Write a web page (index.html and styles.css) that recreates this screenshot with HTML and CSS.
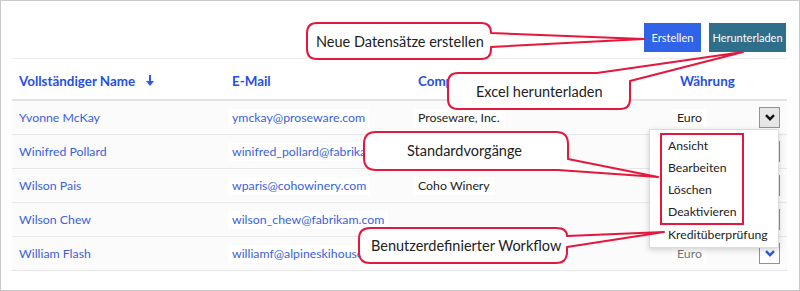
FILE: index.html
```html
<!DOCTYPE html>
<html lang="de">
<head>
<meta charset="UTF-8" />
<title>Kontakte</title>
<link rel="stylesheet" href="styles.css">
</head>
<body>
<div class="frame">
  <div class="toolbar">
    <button class="btn btn-create">Erstellen</button>
    <button class="btn btn-download">Herunterladen</button>
  </div>

  <div class="grid">
    <div class="row head">
      <div class="cell c-name">Vollständiger Name
        <svg class="sort" width="8" height="11" viewBox="0 0 8 11"><path d="M3 0h2v6h3l-4 5-4-5h3z" fill="#2a5ae6"/></svg>
      </div>
      <div class="cell c-mail">E-Mail</div>
      <div class="cell c-comp">Company</div>
      <div class="cell c-cur">Währung</div>
    </div>

    <div class="row">
      <div class="cell c-name"><span class="link">Yvonne McKay</span></div>
      <div class="cell"><span class="box link">ymckay@proseware.com</span></div>
      <div class="cell"><span class="box box-comp">Proseware, Inc.</span></div>
      <div class="cell cur">
        <span class="box box-comp">Euro</span>
        <span class="dd dd-active"><svg width="10" height="7" viewBox="0 0 10 7"><path d="M1 1.2l4 4 4-4" fill="none" stroke="#111" stroke-width="2.4"/></svg></span>
      </div>
    </div>

    <div class="row">
      <div class="cell c-name"><span class="link">Winifred Pollard</span></div>
      <div class="cell"><span class="box link">winifred_pollard@fabrikam.com</span></div>
      <div class="cell"></div>
      <div class="cell cur">
        <span class="dd"></span>
      </div>
    </div>

    <div class="row">
      <div class="cell c-name"><span class="link">Wilson Pais</span></div>
      <div class="cell"><span class="box link">wparis@cohowinery.com</span></div>
      <div class="cell"><span class="box box-comp">Coho Winery</span></div>
      <div class="cell cur">
        <span class="dd"></span>
      </div>
    </div>

    <div class="row">
      <div class="cell c-name"><span class="link">Wilson Chew</span></div>
      <div class="cell"><span class="box link">wilson_chew@fabrikam.com</span></div>
      <div class="cell"></div>
      <div class="cell cur">
        <span class="dd"></span>
      </div>
    </div>

    <div class="row">
      <div class="cell c-name"><span class="link">William Flash</span></div>
      <div class="cell"><span class="box link">williamf@alpineskihouse.com</span></div>
      <div class="cell"></div>
      <div class="cell cur">
        <span class="box box-comp muted">Euro</span>
        <span class="dd"><svg width="10" height="7" viewBox="0 0 10 7"><path d="M1 1.2l4 4 4-4" fill="none" stroke="#2a5ae6" stroke-width="2.4"/></svg></span>
      </div>
    </div>
  </div>

  <div class="overlay">
    <div class="menu">
      <div class="menu-group">
        <div class="menu-item">Ansicht</div>
        <div class="menu-item">Bearbeiten</div>
        <div class="menu-item">Löschen</div>
        <div class="menu-item">Deaktivieren</div>
      </div>
      <div class="menu-item menu-extra">Kreditüberprüfung</div>
    </div>

    <svg class="callouts" width="800" height="291" viewBox="0 0 800 291">
      <path d="M317 23H481Q491 23 491 33L644 39L491 47V49Q491 59 481 59H317Q307 59 307 49V33Q307 23 317 23Z"/>
      <path d="M458 73H597L743 52L630 81V99Q630 109 620 109H458Q448 109 448 99V83Q448 73 458 73Z"/>
      <path d="M376 132H556Q568 132 568 144V159L658 177L558 170H376Q364 170 364 158V144Q364 132 376 132Z"/>
      <path d="M370 228H556Q567 228 567 236L664 232L567 247V252Q567 263 556 263H370Q359 263 359 252V239Q359 228 370 228Z"/>
    </svg>

    <div class="label l-create">Neue Datensätze erstellen</div>
    <div class="label l-excel">Excel herunterladen</div>
    <div class="label l-std">Standardvorgänge</div>
    <div class="label l-flow">Benutzerdefinierter Workflow</div>
  </div>
</div>
</body>
</html>
```

FILE: styles.css
```css
body {
  margin: 0;
  font-family: Lato, "Open Sans", sans-serif;
  color: #222;
  background: white;
}

.frame {
  position: relative;
  width: 800px;
  height: 291px;
  box-sizing: border-box;
  border: 1px solid #c9c9c9;
  padding: 0 12px 0 11px;
  overflow: hidden;
}

/* toolbar */

.toolbar {
  display: flex;
  justify-content: flex-end;
  gap: 8px;
  padding: 22px 1px 6px 0;
  border-bottom: 1px solid #ececec;
}

.btn {
  height: 29px;
  border: none;
  color: white;
  font-family: inherit;
  font-size: 11px;
  padding: 0;
}

.btn-create {
  width: 57px;
  background: #2f63e8;
}

.btn-download {
  width: 77px;
  background: #2e6f8c;
}

/* grid */

.row {
  display: grid;
  grid-template-columns: 216px 185px 259px 1fr;
  align-items: center;
  height: 33px;
  border-bottom: 1px solid #e7e7e7;
  background: #fbfbfb;
  font-size: 12.3px;
}

.row.head {
  height: 37px;
  padding-top: 3px;
  border-bottom: 2px solid #e2e2e2;
  background: white;
  font-weight: bold;
  font-size: 13.4px;
  color: #1f50e6;
}

.cell {
  white-space: nowrap;
  overflow: hidden;
}

.c-name {
  padding-left: 7px;
  display: flex;
  align-items: center;
}

.head .c-mail { padding-left: 4px; }
.head .c-comp { padding-left: 5px; }
.head .c-cur { padding-left: 8px; }

.sort {
  margin-left: 11px;
}

.link {
  color: #3a5fde;
}

.box {
  display: inline-block;
  height: 18px;
  line-height: 18px;
  padding: 0 4px;
  background: white;
}

.box-comp {
  padding: 0 5px;
  color: #222;
}

.muted {
  color: #777;
}

.cur {
  display: flex;
  align-items: center;
  padding-right: 7px;
}

.dd {
  display: flex;
  align-items: center;
  justify-content: center;
  width: 19px;
  height: 19px;
  margin-left: auto;
  border: 1px solid #6f93ea;
  background: white;
}

.dd-active {
  background: #e6e6e6;
}

/* overlay: menu and callouts */

.overlay {
  position: absolute;
  left: -1px;
  top: -1px;
  width: 800px;
  height: 291px;
}

.menu {
  position: absolute;
  left: 649px;
  top: 129px;
  width: 130px;
  height: 119px;
  box-sizing: border-box;
  padding: 3px 0 0 10px;
  background: white;
  border: 1px solid #dcdcdc;
  box-shadow: 0 2px 6px rgba(0, 0, 0, 0.18);
  font-size: 12.2px;
}

.menu-group {
  width: 84px;
  box-sizing: border-box;
  border: 2px solid #e5173c;
}

.menu-item {
  height: 22px;
  line-height: 22px;
  padding-left: 6px;
  white-space: nowrap;
}

.menu-extra {
  height: 20px;
  line-height: 20px;
  padding-left: 8px;
}

.callouts {
  position: absolute;
  left: 0;
  top: 0;
}

.callouts path {
  fill: white;
  stroke: #e5173c;
  stroke-width: 2;
  stroke-linejoin: round;
}

.label {
  position: absolute;
  font-size: 14.5px;
  line-height: 20px;
  color: #222;
  white-space: nowrap;
}

.l-create { left: 316px; top: 32px; }
.l-excel { left: 476px; top: 82px; }
.l-std { left: 407px; top: 141px; }
.l-flow { left: 371px; top: 236px; }
```
